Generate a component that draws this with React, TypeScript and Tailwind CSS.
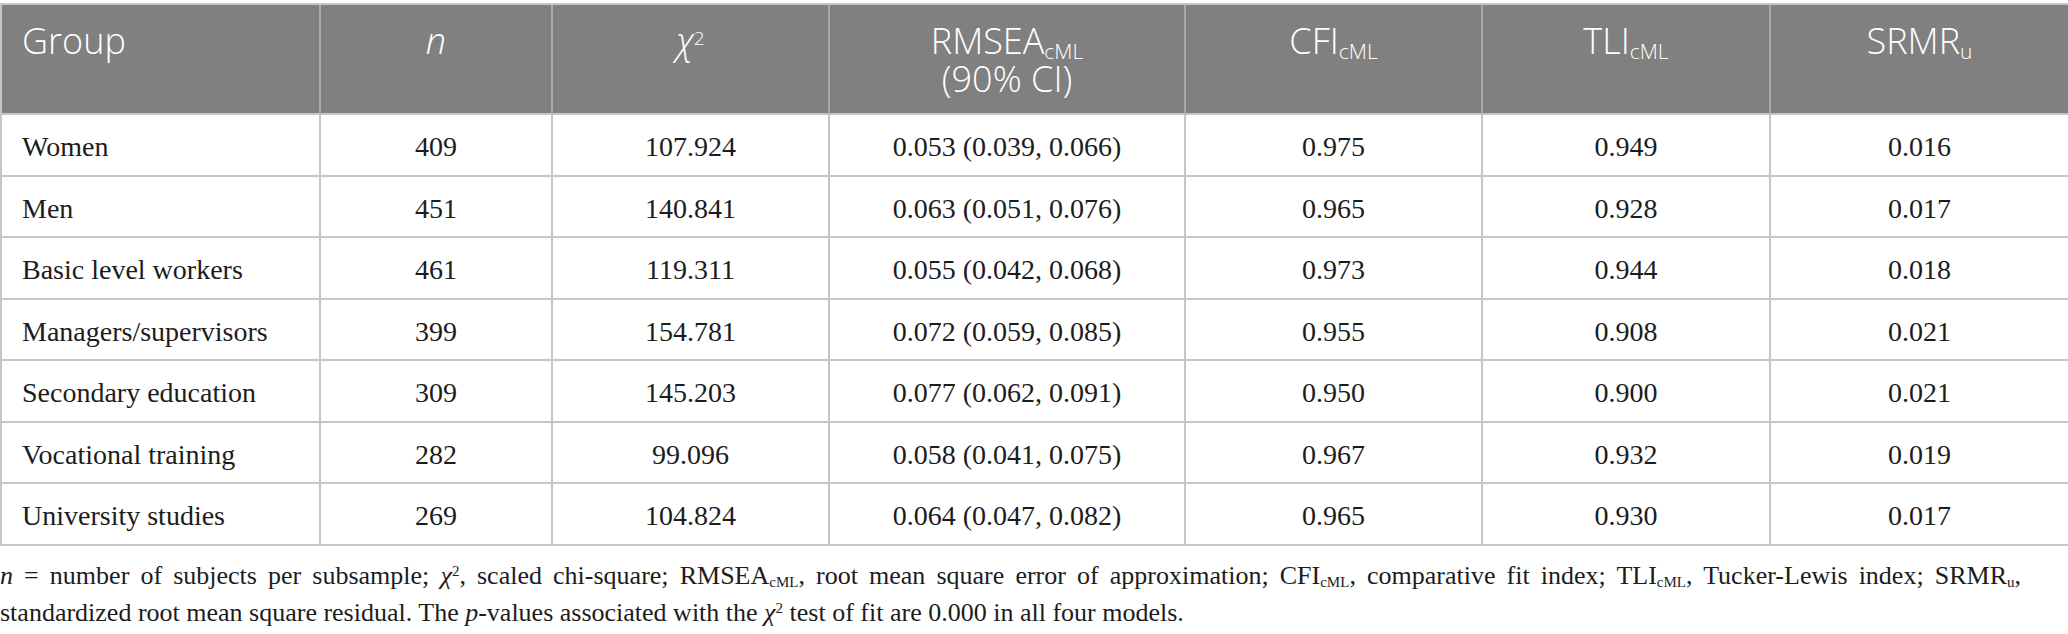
import React from "react";

const rows: [string, string, string, string, string, string, string][] = [
  ["Women", "409", "107.924", "0.053 (0.039, 0.066)", "0.975", "0.949", "0.016"],
  ["Men", "451", "140.841", "0.063 (0.051, 0.076)", "0.965", "0.928", "0.017"],
  ["Basic level workers", "461", "119.311", "0.055 (0.042, 0.068)", "0.973", "0.944", "0.018"],
  ["Managers/supervisors", "399", "154.781", "0.072 (0.059, 0.085)", "0.955", "0.908", "0.021"],
  ["Secondary education", "309", "145.203", "0.077 (0.062, 0.091)", "0.950", "0.900", "0.021"],
  ["Vocational training", "282", "99.096", "0.058 (0.041, 0.075)", "0.967", "0.932", "0.019"],
  ["University studies", "269", "104.824", "0.064 (0.047, 0.082)", "0.965", "0.930", "0.017"],
];

const grid = "grid grid-cols-[319px_232px_277px_356px_297px_288px_299px]";
const hcell =
  "h-[110px] border-r-2 border-b-2 border-r-[#a9aaa9] border-b-[#c6c6c6] pt-[17px] text-white text-[36px] leading-[38px] font-light";
const sans = "font-['Open_Sans','Noto_Sans',sans-serif]";
const serif = "font-['Liberation_Serif','Times_New_Roman',serif]";

export default function App() {
  return (
    <div className="w-[2068px] h-[634px] bg-white pt-[3px] overflow-hidden">
      <div className="border-t-2 border-l-2 border-[#c6c6c6]">
        <div className={`${grid} bg-[#7f807f] ${sans}`}>
          <div className={`${hcell} pl-[20px]`}>Group</div>
          <div className={`${hcell} text-center italic`}>n</div>
          <div className={`${hcell} text-center`}>
            <span className="italic">χ</span>
            <sup className="text-[19px]">2</sup>
          </div>
          <div className={`${hcell} flex flex-col items-center`}>
            <span>
              RMSEA<sub className="text-[21px]">cML</sub>
            </span>
            <span>(90% CI)</span>
          </div>
          <div className={`${hcell} text-center`}>
            CFI<sub className="text-[21px]">cML</sub>
          </div>
          <div className={`${hcell} text-center`}>
            TLI<sub className="text-[21px]">cML</sub>
          </div>
          <div className={`${hcell} text-center`}>
            SRMR<sub className="text-[21px]">u</sub>
          </div>
        </div>
        {rows.map((r) => (
          <div key={r[0]} className={`${grid} ${serif} text-[28px] text-[#1c1c1c]`}>
            {r.map((c, i) => (
              <div
                key={i}
                className={`h-[61.5px] border-r-2 border-b-2 border-[#c6c6c6] flex items-center pt-[5px] ${
                  i === 0 ? "pl-[20px]" : "justify-center"
                }`}
              >
                {c}
              </div>
            ))}
          </div>
        ))}
      </div>
      <div className={`${serif} text-[26px] leading-[37px] text-[#1c1c1c] mt-[11px] whitespace-nowrap`}>
        <div className="w-[2021px] text-justify [text-align-last:justify] whitespace-normal">
          <span className="italic">n</span> = number of subjects per subsample;{" "}
          <span className="italic">χ</span>
          <sup className="text-[15px]">2</sup>, scaled chi-square; RMSEA
          <sub className="text-[15px]">cML</sub>, root mean square error of approximation; CFI
          <sub className="text-[15px]">cML</sub>, comparative fit index; TLI
          <sub className="text-[15px]">cML</sub>, Tucker-Lewis index; SRMR
          <sub className="text-[15px]">u</sub>,
        </div>
        <div>
          standardized root mean square residual. The <span className="italic">p</span>-values
          associated with the <span className="italic">χ</span>
          <sup className="text-[15px]">2</sup> test of fit are 0.000 in all four models.
        </div>
      </div>
    </div>
  );
}
